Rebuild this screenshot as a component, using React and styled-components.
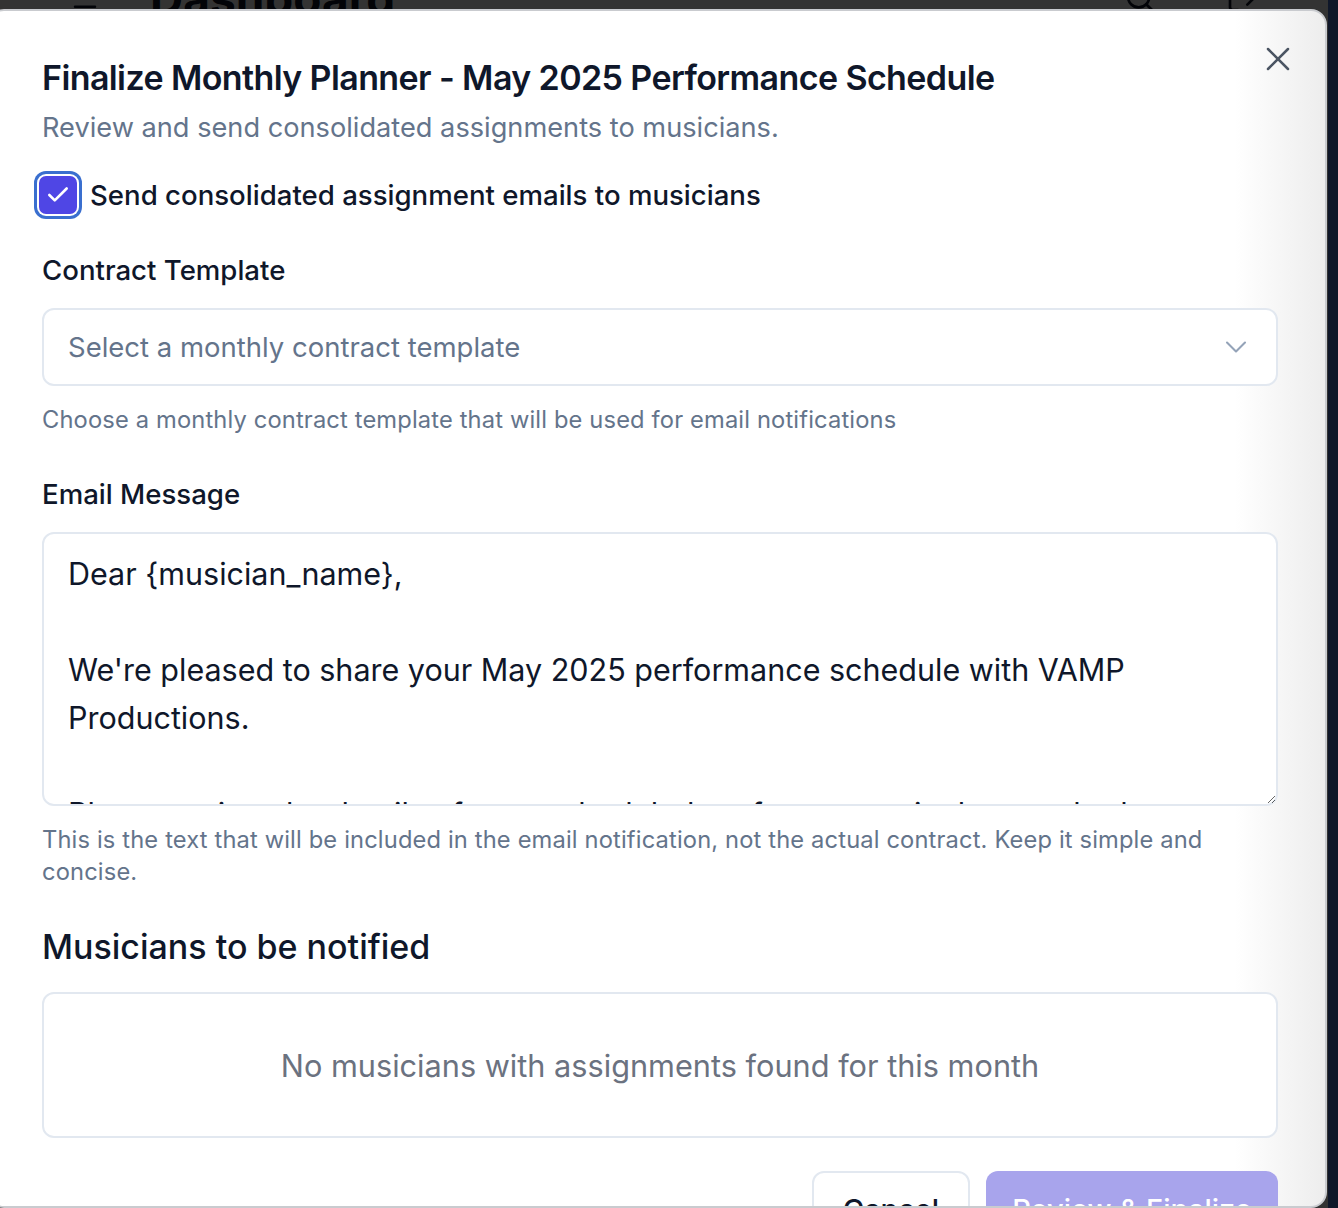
import React from "react";
import styled, { createGlobalStyle } from "styled-components";
import { X, ChevronDown, Check, Menu, Search, LogOut } from "lucide-react";

const GlobalStyle = createGlobalStyle`
  html, body {
    margin: 0;
    padding: 0;
    height: 100%;
    overflow: hidden;
    font-family: Inter, "Noto Sans", "Liberation Sans", sans-serif;
  }
  #root {
    height: 100%;
  }
  * {
    box-sizing: border-box;
  }
`;

const Page = styled.div`
  position: relative;
  display: flex;
  width: 100%;
  height: 1208px;
  background-color: #ffffff;
  overflow: hidden;
`;

const Main = styled.div`
  flex: 1;
  display: flex;
  flex-direction: column;
`;

const Header = styled.header`
  display: flex;
  align-items: center;
  gap: 50px;
  height: 60px;
  margin-top: -32px;
  padding: 0 70px 0 70px;
  color: #0f172a;
`;

const HeaderTitle = styled.h1`
  margin: 0;
  flex: 1;
  font-size: 46px;
  font-weight: 700;
`;

const HeaderIcons = styled.div`
  display: flex;
  gap: 70px;
`;

const SideStrip = styled.div`
  width: 10px;
  background-color: #0f1729;
`;

const Overlay = styled.div`
  position: absolute;
  inset: 0 10px 0 0;
  background-color: rgba(0, 0, 0, 0.8);
`;

const Modal = styled.div`
  position: absolute;
  top: 9px;
  left: -12px;
  width: 1339px;
  height: 1199px;
  padding: 47px 47px 0 52px;
  border: 2px solid #c9cbcf;
  border-radius: 16px;
  background: linear-gradient(to right, #ffffff calc(100% - 90px), #ededed 100%);
  overflow: hidden;
`;

const CloseButton = styled.button`
  position: absolute;
  top: 28px;
  right: 27px;
  width: 40px;
  height: 40px;
  padding: 0;
  border: none;
  background: none;
  color: #4b5563;
  display: flex;
  align-items: center;
  justify-content: center;
  cursor: pointer;
`;

const Title = styled.h2`
  margin: 0;
  font-size: 34px;
  line-height: 40px;
  font-weight: 600;
  letter-spacing: -0.6px;
  color: #0f172a;
`;

const Subtitle = styled.p`
  margin: 12px 0 0;
  font-size: 27.2px;
  line-height: 36px;
  color: #64748b;
`;

const CheckRow = styled.label`
  display: flex;
  align-items: center;
  gap: 13px;
  margin-top: 26px;
  height: 46px;
  cursor: pointer;
`;

const CheckBox = styled.span`
  flex-shrink: 0;
  margin-left: -3px;
  width: 38px;
  height: 38px;
  border-radius: 7px;
  background-color: #4f46e5;
  box-shadow: 0 0 0 2px #ffffff, 0 0 0 5px #3a6fcf;
  color: #ffffff;
  display: flex;
  align-items: center;
  justify-content: center;
`;

const CheckLabel = styled.span`
  font-size: 27.6px;
  font-weight: 500;
  color: #0f172a;
`;

const FieldLabel = styled.div`
  margin-top: ${(p) => p.$top}px;
  font-size: 27.6px;
  line-height: 32px;
  font-weight: 500;
  color: #0f172a;
`;

const SelectBox = styled.div`
  margin-top: 22px;
  height: 78px;
  padding: 0 24px;
  border: 2px solid #e2e8f0;
  border-radius: 12px;
  background-color: #ffffff;
  display: flex;
  align-items: center;
  justify-content: space-between;
  font-size: 27.5px;
  color: #64748b;
`;

const ChevronIcon = styled(ChevronDown)`
  color: #94a3b8;
  margin-right: -2px;
`;

const Helper = styled.p`
  margin: 18px 0 0;
  font-size: 23.7px;
  line-height: 32px;
  color: #64748b;
  letter-spacing: 0.15px;
`;

const TextArea = styled.textarea`
  display: block;
  width: 100%;
  margin-top: 22px;
  height: 274px;
  padding: 16px 24px;
  border: 2px solid #e2e8f0;
  border-radius: 12px;
  background-color: #ffffff;
  font-family: inherit;
  font-size: 30.5px;
  line-height: 48px;
  color: #0f172a;
  resize: vertical;
  overflow: hidden;
  outline: none;
`;

const SectionTitle = styled.h3`
  margin: 37px 0 0;
  font-size: 34px;
  line-height: 44px;
  font-weight: 500;
  color: #0f172a;
`;

const EmptyBox = styled.div`
  margin-top: 23px;
  height: 146px;
  border: 2px solid #e2e8f0;
  border-radius: 12px;
  background-color: #ffffff;
  display: flex;
  align-items: center;
  justify-content: center;
  font-size: 30.7px;
  color: #6b7280;
`;

const Footer = styled.div`
  margin-top: 33px;
  display: flex;
  justify-content: flex-end;
  gap: 16px;
`;

const Button = styled.button`
  height: 76px;
  border-radius: 12px;
  font-family: inherit;
  font-size: 29px;
  font-weight: 500;
  cursor: pointer;
`;

const CancelButton = styled(Button)`
  width: 158px;
  border: 2px solid #e2e8f0;
  background-color: #ffffff;
  color: #0f172a;
`;

const PrimaryButton = styled(Button)`
  width: 292px;
  border: none;
  background-color: #a8a4ec;
  color: #ffffff;
`;

const message = `Dear {musician_name},

We're pleased to share your May 2025 performance schedule with VAMP Productions.

Please review the details of your scheduled performances in the attached contract and confirm your availability.

Best regards,
VAMP Productions`;

const App = () => {
  return (
    <>
      <GlobalStyle />
      <Page>
        <Main>
          <Header>
            <Menu size={30} />
            <HeaderTitle>Dashboard</HeaderTitle>
            <HeaderIcons>
              <Search size={32} />
              <LogOut size={32} />
            </HeaderIcons>
          </Header>
        </Main>
        <SideStrip />
        <Overlay />
        <Modal>
          <CloseButton type="button">
            <X size={40} strokeWidth={1.5} />
          </CloseButton>
          <Title>Finalize Monthly Planner - May 2025 Performance Schedule</Title>
          <Subtitle>Review and send consolidated assignments to musicians.</Subtitle>
          <CheckRow>
            <CheckBox>
              <Check size={26} strokeWidth={2.4} />
            </CheckBox>
            <CheckLabel>Send consolidated assignment emails to musicians</CheckLabel>
          </CheckRow>

          <FieldLabel $top={36}>Contract Template</FieldLabel>
          <SelectBox>
            <span>Select a monthly contract template</span>
            <ChevronIcon size={36} strokeWidth={1.4} />
          </SelectBox>
          <Helper>Choose a monthly contract template that will be used for email notifications</Helper>

          <FieldLabel $top={42}>Email Message</FieldLabel>
          <TextArea defaultValue={message} />
          <Helper>
            This is the text that will be included in the email notification, not the actual contract. Keep it simple and concise.
          </Helper>

          <SectionTitle>Musicians to be notified</SectionTitle>
          <EmptyBox>No musicians with assignments found for this month</EmptyBox>

          <Footer>
            <CancelButton type="button">Cancel</CancelButton>
            <PrimaryButton type="button">Review &amp; Finalize</PrimaryButton>
          </Footer>
        </Modal>
      </Page>
    </>
  );
};

export default App;
